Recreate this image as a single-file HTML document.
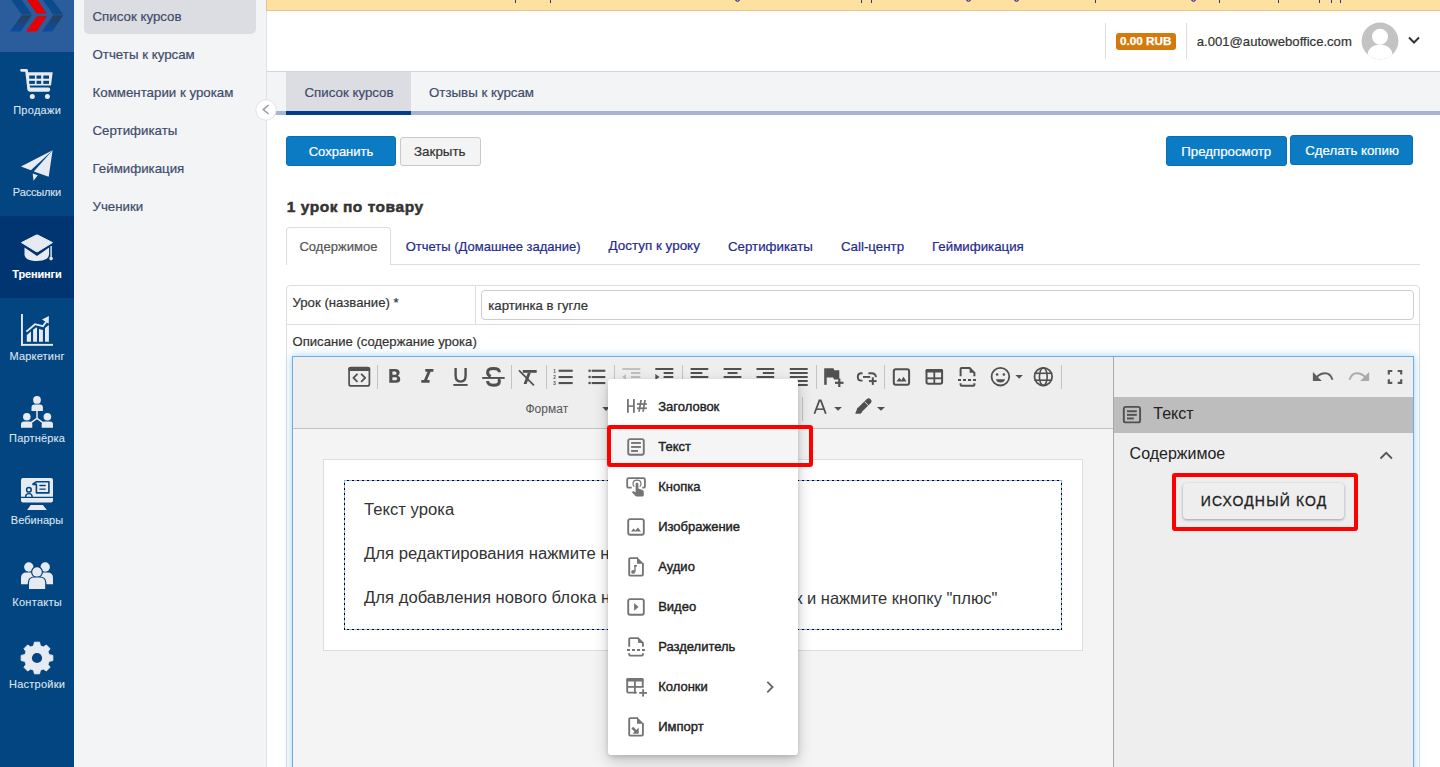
<!DOCTYPE html>
<html><head><meta charset="utf-8"><style>
*{box-sizing:border-box;margin:0;padding:0}
html,body{width:1440px;height:767px;overflow:hidden;background:#fff;font-family:"Liberation Sans",sans-serif}
.a{position:absolute}
.t{position:absolute;white-space:nowrap;line-height:1}
svg{overflow:visible}
</style></head><body>
<div class="a" style="left:0px;top:0px;width:74px;height:767px;background:#034581"></div>
<div class="a" style="left:0px;top:52px;width:74px;height:0px;"></div>
<div class="a" style="left:0px;top:0px;width:74px;height:52px;background:#2b5c9b"></div>
<svg class="a" style="left:0px;top:0px;" width="74" height="52" viewBox="0 0 74 52">
<defs><linearGradient id="lg1" x1="0" y1="0" x2="0" y2="1"><stop offset="0" stop-color="#2a3f58"/><stop offset="1" stop-color="#0a4ca4"/></linearGradient></defs>
<polygon points="11.2,0 21.7,0 31.8,14.6 21.7,14.6" fill="#0b4a8c"/>
<polygon points="21.7,15.2 31.8,15.2 20.7,31.5 9.8,31.5" fill="url(#lg1)"/>
<polygon points="27.1,0 37.6,0 46.75,13.6 36.6,13.6" fill="#e60000"/>
<polygon points="36.9,16.3 46.75,16.3 36.6,31.5 26.1,31.5" fill="#e60000"/>
<polygon points="43,0 52.5,0 63.4,14.6 53.2,14.6" fill="#0b4a8c"/>
<polygon points="53.2,15.2 63.4,15.2 52.2,31.5 42,31.5" fill="url(#lg1)"/>
</svg>
<div class="a" style="left:0px;top:216px;width:74px;height:82px;background:#013571"></div>
<div class="t" style="left:0.145px;top:105.19px;font-size:11px;color:#dde4ee;font-weight:400;letter-spacing:0.29px;width:74px;text-align:center;-webkit-text-stroke:0.1px #dde4ee">Продажи</div>
<div class="t" style="left:-0.075px;top:187.19px;font-size:11px;color:#dde4ee;font-weight:400;letter-spacing:-0.15px;width:74px;text-align:center;-webkit-text-stroke:0.1px #dde4ee">Рассылки</div>
<div class="t" style="left:-0.075px;top:269.19px;font-size:11px;color:#ffffff;font-weight:700;letter-spacing:-0.15px;width:74px;text-align:center;-webkit-text-stroke:0.1px #ffffff">Тренинги</div>
<div class="t" style="left:0.085px;top:351.19px;font-size:11px;color:#dde4ee;font-weight:400;letter-spacing:0.17px;width:74px;text-align:center;-webkit-text-stroke:0.1px #dde4ee">Маркетинг</div>
<div class="t" style="left:0.09px;top:433.19px;font-size:11px;color:#dde4ee;font-weight:400;letter-spacing:0.18px;width:74px;text-align:center;-webkit-text-stroke:0.1px #dde4ee">Партнёрка</div>
<div class="t" style="left:0.03px;top:515.19px;font-size:11px;color:#dde4ee;font-weight:400;letter-spacing:0.06px;width:74px;text-align:center;-webkit-text-stroke:0.1px #dde4ee">Вебинары</div>
<div class="t" style="left:0.13px;top:597.19px;font-size:11px;color:#dde4ee;font-weight:400;letter-spacing:0.26px;width:74px;text-align:center;-webkit-text-stroke:0.1px #dde4ee">Контакты</div>
<div class="t" style="left:0.115px;top:679.19px;font-size:11px;color:#dde4ee;font-weight:400;letter-spacing:0.23px;width:74px;text-align:center;-webkit-text-stroke:0.1px #dde4ee">Настройки</div>
<svg class="a" style="left:0px;top:0px;" width="74" height="110" viewBox="0 0 74 110">
<path d="M21.5,70.3 L26.5,70.3 L28.8,89.5" fill="none" stroke="#e6ebf2" stroke-width="2.8" stroke-linecap="round" stroke-linejoin="round"/>
<path d="M27.5,87.5 L48.5,87.5 Q50.2,87.5 50.2,89.6 Q50.2,91.7 48.5,91.7 L29.5,91.7 Q27.8,91.7 27.8,89.6 Z" fill="#e6ebf2"/>
<path d="M26.5,72.2 L52.7,72.2 L51,85.5 L28.5,85.5 Z" fill="#e6ebf2"/>
<rect x="29.2" y="75.5" width="5.7" height="3.2" fill="#034581"/>
<rect x="36.5" y="75.5" width="4.7" height="3.2" fill="#034581"/>
<rect x="43.3" y="75.5" width="5.7" height="3.2" fill="#034581"/>
<rect x="29.2" y="80.8" width="5.7" height="3.1" fill="#034581"/>
<rect x="36.5" y="80.8" width="4.7" height="3.1" fill="#034581"/>
<rect x="43.3" y="80.8" width="5.7" height="3.1" fill="#034581"/>
<circle cx="32.3" cy="96.4" r="2.5" fill="#e6ebf2"/>
<circle cx="47.4" cy="96.4" r="2.5" fill="#e6ebf2"/>
</svg>
<svg class="a" style="left:0px;top:0px;" width="74" height="190" viewBox="0 0 74 190">
<polygon points="21,166.6 52.6,150.2 30.9,170.2" fill="#e6ebf2"/>
<polygon points="52.6,150.2 48.7,176.8 33.8,171.6" fill="#e6ebf2"/>
<polygon points="32.7,173.6 37.8,175.2 33.5,180.7" fill="#e6ebf2"/>
</svg>
<svg class="a" style="left:0px;top:0px;" width="74" height="270" viewBox="0 0 74 270">
<path d="M24.5,247.5 L24.5,254 Q24.5,261 37,261 Q49.1,261 49.1,254 L49.1,247.5 L37,256 Z" fill="#e6ebf2"/>
<path d="M21.5,242.6 L36,235.2 Q37,234.7 38,235.2 L52.5,242.6 L38,251.5 Q37,252.2 36,251.5 Z" fill="#e6ebf2" stroke="#e6ebf2" stroke-width="1" stroke-linejoin="round"/>
<rect x="50.4" y="246" width="1.4" height="12" fill="#e6ebf2"/>
<circle cx="51.1" cy="258.6" r="1.8" fill="#e6ebf2"/>
</svg>
<svg class="a" style="left:0px;top:0px;" width="74" height="350" viewBox="0 0 74 350">
<rect x="21" y="314" width="1.9" height="31.8" fill="#e6ebf2"/>
<rect x="21" y="343.9" width="32" height="1.9" fill="#e6ebf2"/>
<polygon points="26.8,335 31,331.5 31,341.8 26.8,341.8" fill="#e6ebf2"/>
<polygon points="33.1,329.8 36,327.5 37,327.8 37,341.8 33.1,341.8" fill="#e6ebf2"/>
<polygon points="39,329 42.9,330 42.9,341.8 39,341.8" fill="#e6ebf2"/>
<polygon points="45,328 48.9,325 48.9,341.8 45,341.8" fill="#e6ebf2"/>
<polyline points="26.4,331.6 35,324.2 42.9,326.2 46.2,321.8" fill="none" stroke="#e6ebf2" stroke-width="1.9"/>
<polygon points="42,319.5 48.9,316 48.7,323.8" fill="#e6ebf2"/>
</svg>
<svg class="a" style="left:0px;top:0px;" width="74" height="430" viewBox="0 0 74 430">
<circle cx="37" cy="399.9" r="3.9" fill="#e6ebf2"/>
<path d="M31.5,410.9 L31.5,407.5 Q31.5,404.6 34.5,404.6 L39.9,404.6 Q42.9,404.6 42.9,407.5 L42.9,410.9 Z" fill="#e6ebf2"/>
<circle cx="26.8" cy="416.7" r="3.8" fill="#e6ebf2"/>
<path d="M21,427.8 L21,424.3 Q21,421.4 24,421.4 L29.3,421.4 Q32.3,421.4 32.3,424.3 L32.3,427.8 Z" fill="#e6ebf2"/>
<circle cx="47.4" cy="416.7" r="3.8" fill="#e6ebf2"/>
<path d="M41.7,427.8 L41.7,424.3 Q41.7,421.4 44.7,421.4 L50,421.4 Q53,421.4 53,424.3 L53,427.8 Z" fill="#e6ebf2"/>
<path d="M37,410.9 L37,418.3 L31.1,422.6 M37,418.3 L42.9,422.6" fill="none" stroke="#e6ebf2" stroke-width="1.5"/>
</svg>
<svg class="a" style="left:0px;top:0px;" width="74" height="512" viewBox="0 0 74 512">
<path d="M21,496.8 L21,480 Q21,477.9 23,477.9 L51,477.9 Q53,477.9 53,480 L53,496.8 Z" fill="#e6ebf2"/>
<path d="M21,498.1 L53,498.1 L53,500.6 Q53,502.6 51,502.6 L23,502.6 Q21,502.6 21,500.6 Z" fill="#e6ebf2"/>
<polygon points="30.7,505 42.9,505 46.8,510 27.2,510" fill="#e6ebf2"/>
<path d="M32.4,484.4 L36.2,481.8 L48.9,481.8 L48.9,492.9 L36.4,492.9 L36.4,484.4 L32.4,484.4" fill="none" stroke="#034581" stroke-width="1.6" stroke-linejoin="round"/>
<rect x="39.2" y="484.8" width="6.7" height="1.4" rx="0.7" fill="#034581"/>
<rect x="39.2" y="488.4" width="6.7" height="1.4" rx="0.7" fill="#034581"/>
<circle cx="28.9" cy="489.75" r="2.35" fill="none" stroke="#034581" stroke-width="1.5"/>
<path d="M25.7,496.9 L25.7,496.4 Q25.7,493.6 28.9,493.6 Q32.1,493.6 32.1,496.4 L32.1,496.9" fill="none" stroke="#034581" stroke-width="1.4"/>
</svg>
<svg class="a" style="left:0px;top:0px;" width="74" height="592" viewBox="0 0 74 592">
<circle cx="28.8" cy="567" r="4.7" fill="#e6ebf2"/>
<path d="M21,584.3 L21,578 Q21,572.5 26.5,572.5 L31,572.5 Q36.6,572.5 36.6,578 L36.6,584.3 Z" fill="#e6ebf2"/>
<circle cx="45.2" cy="567" r="4.7" fill="#e6ebf2"/>
<path d="M37.4,584.3 L37.4,578 Q37.4,572.5 43,572.5 L47.5,572.5 Q53,572.5 53,578 L53,584.3 Z" fill="#e6ebf2"/>
<circle cx="37" cy="572.1" r="5.4" fill="#e6ebf2" stroke="#034581" stroke-width="1.2"/>
<path d="M28.4,589.5 L28.4,583 Q28.4,577 34.5,577 L39.6,577 Q45.8,577 45.8,583 L45.8,589.5 Z" fill="#e6ebf2" stroke="#034581" stroke-width="1.2"/>
</svg>
<svg class="a" style="left:0px;top:0px;" width="74" height="680" viewBox="0 0 74 680"><polygon points="49.14,654.64 52.80,655.45 52.80,660.55 49.14,661.36 47.96,664.21 49.97,667.37 46.37,670.97 43.21,668.96 40.36,670.14 39.55,673.80 34.45,673.80 33.64,670.14 30.79,668.96 27.63,670.97 24.03,667.37 26.04,664.21 24.86,661.36 21.20,660.55 21.20,655.45 24.86,654.64 26.04,651.79 24.03,648.63 27.63,645.03 30.79,647.04 33.64,645.86 34.45,642.20 39.55,642.20 40.36,645.86 43.21,647.04 46.37,645.03 49.97,648.63 47.96,651.79" fill="#e6ebf2" stroke="#e6ebf2" stroke-width="1" stroke-linejoin="round"/><circle cx="37" cy="658" r="5.1" fill="#034581"/></svg>
<div class="a" style="left:74px;top:0px;width:193px;height:767px;background:#f3f4f6;border-right:1px solid #dfe1e6"></div>
<div class="a" style="left:84px;top:0px;width:172px;height:34px;background:#dcdde2;border-radius:0 0 5px 5px"></div>
<div class="t" style="left:92.5px;top:9.94px;font-size:13.3px;color:#3f4c6b;font-weight:400;-webkit-text-stroke:0.2px #3f4c6b;">Список курсов</div>
<div class="t" style="left:92.5px;top:47.94px;font-size:13.3px;color:#3f4c6b;font-weight:400;-webkit-text-stroke:0.2px #3f4c6b;">Отчеты к курсам</div>
<div class="t" style="left:92.5px;top:85.94px;font-size:13.3px;color:#3f4c6b;font-weight:400;-webkit-text-stroke:0.2px #3f4c6b;">Комментарии к урокам</div>
<div class="t" style="left:92.5px;top:123.94px;font-size:13.3px;color:#3f4c6b;font-weight:400;-webkit-text-stroke:0.2px #3f4c6b;">Сертификаты</div>
<div class="t" style="left:92.5px;top:161.94px;font-size:13.3px;color:#3f4c6b;font-weight:400;-webkit-text-stroke:0.2px #3f4c6b;">Геймификация</div>
<div class="t" style="left:92.5px;top:199.94px;font-size:13.3px;color:#3f4c6b;font-weight:400;-webkit-text-stroke:0.2px #3f4c6b;">Ученики</div>
<div class="a" style="left:266px;top:0px;width:1174px;height:11px;background:#fee0a0;border-bottom:1px solid #e3c88e;border-left:1px solid #dcc38a"></div>
<div class="a" style="left:515px;top:0px;width:1.3px;height:2.6px;background:#2c3a92"></div>
<div class="a" style="left:549.6px;top:0px;width:1.3px;height:2.6px;background:#2c3a92"></div>
<div class="a" style="left:861px;top:0px;width:1.3px;height:2.6px;background:#2c3a92"></div>
<div class="a" style="left:871px;top:0px;width:1.3px;height:2.6px;background:#2c3a92"></div>
<div class="a" style="left:1095px;top:0px;width:1.3px;height:2.6px;background:#2c3a92"></div>
<div class="a" style="left:1219px;top:0px;width:1.3px;height:2.6px;background:#2c3a92"></div>
<div class="a" style="left:1277.5px;top:0px;width:1.3px;height:2.6px;background:#2c3a92"></div>
<div class="a" style="left:1319px;top:0px;width:1.3px;height:2.6px;background:#2c3a92"></div>
<div class="a" style="left:1330.6px;top:0px;width:1.3px;height:2.6px;background:#2c3a92"></div>
<div class="a" style="left:1340px;top:0px;width:1.3px;height:2.6px;background:#2c3a92"></div>
<svg class="a" style="left:734px;top:0px;" width="8" height="4" viewBox="0 0 8 4"><path d="M1,-1 Q3.5,3.5 6,-1" fill="none" stroke="#2c3a92" stroke-width="1.2"/></svg>
<svg class="a" style="left:965px;top:0px;" width="8" height="4" viewBox="0 0 8 4"><path d="M1,-1 Q3.5,3.5 6,-1" fill="none" stroke="#2c3a92" stroke-width="1.2"/></svg>
<svg class="a" style="left:1013px;top:0px;" width="8" height="4" viewBox="0 0 8 4"><path d="M1,-1 Q3.5,3.5 6,-1" fill="none" stroke="#2c3a92" stroke-width="1.2"/></svg>
<svg class="a" style="left:1190px;top:0px;" width="8" height="4" viewBox="0 0 8 4"><path d="M1,-1 Q3.5,3.5 6,-1" fill="none" stroke="#2c3a92" stroke-width="1.2"/></svg>
<div class="a" style="left:267px;top:11px;width:1173px;height:61px;background:#fff;border-bottom:1px solid #d3d5da"></div>
<div class="a" style="left:1105px;top:23px;width:1px;height:36px;background:#dedede"></div>
<div class="a" style="left:1186px;top:23px;width:1px;height:36px;background:#dedede"></div>
<div class="a" style="left:1116px;top:33px;width:60px;height:17px;background:#d4790b;border-radius:3px"></div>
<div class="t" style="left:1120px;top:34.90px;font-size:11.7px;color:#fff;font-weight:700;-webkit-text-stroke:0.25px #fff;">0.00 RUB</div>
<div class="t" style="left:1196.8px;top:34.71px;font-size:13.1px;color:#333;font-weight:400;-webkit-text-stroke:0.2px #333;">a.001@autoweboffice.com</div>
<svg class="a" style="left:1360px;top:21px;" width="40" height="40" viewBox="0 0 40 40">
<defs><clipPath id="avc"><circle cx="20" cy="20" r="18.4"/></clipPath></defs>
<circle cx="20" cy="20" r="18.4" fill="#c3c3c3"/>
<g clip-path="url(#avc)"><circle cx="20" cy="15.7" r="8" fill="#fff"/><ellipse cx="20" cy="34" rx="12.5" ry="10.5" fill="#fff"/></g>
</svg>
<svg class="a" style="left:1405px;top:33px;" width="18" height="14" viewBox="0 0 18 14"><polyline points="4,4.5 9,9.5 14,4.5" fill="none" stroke="#333" stroke-width="2"/></svg>
<div class="a" style="left:267px;top:72px;width:1173px;height:43px;background:#f3f4f6"></div>
<div class="a" style="left:267px;top:111px;width:1173px;height:4px;background:#a7b5cf"></div>
<div class="a" style="left:286px;top:72px;width:125px;height:43px;background:#dcdde2"></div>
<div class="a" style="left:286px;top:111px;width:125px;height:4px;background:#033c87"></div>
<div class="t" style="left:304.5px;top:86.04px;font-size:13.3px;color:#3f4c6b;font-weight:400;-webkit-text-stroke:0.2px #3f4c6b;">Список курсов</div>
<div class="t" style="left:429px;top:86.04px;font-size:13.3px;color:#3f4c6b;font-weight:400;-webkit-text-stroke:0.2px #3f4c6b;">Отзывы к курсам</div>
<svg class="a" style="left:255px;top:99px;" width="22" height="22" viewBox="0 0 22 22"><circle cx="11" cy="11" r="10.2" fill="#fff" stroke="#e3e4e8" stroke-width="1"/><polyline points="13.6,6 8.2,10.6 13.6,15" fill="none" stroke="#999999" stroke-width="1.4"/></svg>
<div class="a" style="left:286px;top:136px;width:110px;height:30px;background:#0b7bc3;border:1px solid #0a6fb2;border-radius:3px"></div>
<div class="t" style="left:308.7px;top:144.90px;font-size:13px;color:#fff;font-weight:400;-webkit-text-stroke:0.2px #fff;">Сохранить</div>
<div class="a" style="left:399.5px;top:136.5px;width:81px;height:29px;background:#f4f4f4;border:1px solid #c9c9c9;border-radius:3px"></div>
<div class="t" style="left:414px;top:144.76px;font-size:13.4px;color:#333;font-weight:400;-webkit-text-stroke:0.2px #333;">Закрыть</div>
<div class="a" style="left:1166px;top:136px;width:121px;height:30px;background:#0b7bc3;border:1px solid #0a6fb2;border-radius:3px"></div>
<div class="a" style="left:1290px;top:135px;width:123px;height:30px;background:#0b7bc3;border:1px solid #0a6fb2;border-radius:3px"></div>
<div class="t" style="left:1181.3px;top:144.78px;font-size:13.25px;color:#fff;font-weight:400;-webkit-text-stroke:0.2px #fff;">Предпросмотр</div>
<div class="t" style="left:1305.3px;top:143.58px;font-size:13.25px;color:#fff;font-weight:400;-webkit-text-stroke:0.2px #fff;">Сделать копию</div>
<div class="t" style="left:286.7px;top:199.48px;font-size:15.5px;color:#333;font-weight:700;letter-spacing:0.55px;-webkit-text-stroke:0.5px #333;">1 урок по товару</div>
<div class="a" style="left:286px;top:264px;width:1134px;height:1px;background:#dddddd"></div>
<div class="a" style="left:286px;top:227px;width:105px;height:38px;background:#fff;border:1px solid #dddddd;border-bottom:none;border-radius:4px 4px 0 0"></div>
<div class="t" style="left:299.4px;top:239.75px;font-size:13.05px;color:#555;font-weight:400;-webkit-text-stroke:0.2px #555;">Содержимое</div>
<div class="t" style="left:405.7px;top:239.80px;font-size:13px;color:#1f2a8c;font-weight:400;-webkit-text-stroke:0.2px #1f2a8c;">Отчеты (Домашнее задание)</div>
<div class="t" style="left:608.5px;top:239.41px;font-size:13.45px;color:#1f2a8c;font-weight:400;-webkit-text-stroke:0.2px #1f2a8c;">Доступ к уроку</div>
<div class="t" style="left:728px;top:239.54px;font-size:13.3px;color:#1f2a8c;font-weight:400;-webkit-text-stroke:0.2px #1f2a8c;">Сертификаты</div>
<div class="t" style="left:841px;top:239.54px;font-size:13.3px;color:#1f2a8c;font-weight:400;-webkit-text-stroke:0.2px #1f2a8c;">Call-центр</div>
<div class="t" style="left:932px;top:239.54px;font-size:13.3px;color:#1f2a8c;font-weight:400;-webkit-text-stroke:0.2px #1f2a8c;">Геймификация</div>
<div class="a" style="left:286px;top:285px;width:1134px;height:500px;background:#fff;border:1px solid #dddddd;border-radius:4px"></div>
<div class="a" style="left:475px;top:286px;width:1px;height:38px;background:#dddddd"></div>
<div class="a" style="left:287px;top:324px;width:1132px;height:1px;background:#dddddd"></div>
<div class="t" style="left:292.5px;top:296.03px;font-size:13.2px;color:#333;font-weight:400;-webkit-text-stroke:0.2px #333;">Урок (название) *</div>
<div class="a" style="left:481px;top:290px;width:933px;height:30px;background:#fff;border:1px solid #cccccc;border-radius:4px"></div>
<div class="t" style="left:488.3px;top:298.83px;font-size:13.2px;color:#333;font-weight:400;-webkit-text-stroke:0.2px #333;">картинка в гугле</div>
<div class="t" style="left:292.5px;top:334.71px;font-size:13.1px;color:#333;font-weight:400;-webkit-text-stroke:0.2px #333;">Описание (содержание урока)</div>
<div class="a" style="left:292px;top:356px;width:1122px;height:430px;border:1px solid #66afe9;box-shadow:0 0 8px rgba(102,175,233,.6);background:#f4f4f4"></div>
<div class="a" style="left:293px;top:357px;width:820px;height:71px;background:#eeeeee"></div>
<div class="a" style="left:293px;top:428px;width:820px;height:1px;background:#c2c2c2"></div>
<div class="a" style="left:293px;top:429px;width:820px;height:340px;background:#f4f4f4"></div>
<div class="a" style="left:1113px;top:357px;width:1px;height:420px;background:#a9a9a9"></div>
<div class="a" style="left:1114px;top:357px;width:299px;height:420px;background:#eeeeee"></div>
<div class="a" style="left:377px;top:365px;width:1px;height:24px;background:#c4c4c4"></div>
<div class="a" style="left:511px;top:365px;width:1px;height:24px;background:#c4c4c4"></div>
<div class="a" style="left:546px;top:365px;width:1px;height:24px;background:#c4c4c4"></div>
<div class="a" style="left:614px;top:365px;width:1px;height:24px;background:#c4c4c4"></div>
<div class="a" style="left:682px;top:365px;width:1px;height:24px;background:#c4c4c4"></div>
<div class="a" style="left:816px;top:365px;width:1px;height:24px;background:#c4c4c4"></div>
<div class="a" style="left:884px;top:365px;width:1px;height:24px;background:#c4c4c4"></div>
<div class="a" style="left:1061px;top:365px;width:1px;height:24px;background:#c4c4c4"></div>
<div class="a" style="left:802px;top:397px;width:1px;height:24px;background:#c4c4c4"></div>
<svg class="a" style="left:0px;top:0px;" width="1" height="1" viewBox="0 0 1 1">
<g fill="none" stroke="#505050" stroke-linecap="butt">
 <rect x="349.1" y="367.7" width="20.3" height="18.2" rx="2" stroke-width="1.7"/>
</g>
<rect x="348.3" y="366.9" width="21.9" height="4" rx="1.5" fill="#505050"/>
<polyline points="357,374.3 353.4,377.8 357,381.3" fill="none" stroke="#505050" stroke-width="1.8" stroke-linecap="round" stroke-linejoin="round"/>
<polyline points="361.6,374.3 365.2,377.8 361.6,381.3" fill="none" stroke="#505050" stroke-width="1.8" stroke-linecap="round" stroke-linejoin="round"/>
<!-- B -->
<path fill="#505050" fill-rule="evenodd" d="M389.3,369 L395.2,369 Q399.6,369 399.6,372.6 Q399.6,374.9 397.8,375.7 Q400.3,376.6 400.3,379.2 Q400.3,382.8 395.8,382.8 L389.3,382.8 Z M392.4,371.6 L392.4,374.7 L395.1,374.7 Q396.6,374.7 396.6,373.15 Q396.6,371.6 395.1,371.6 Z M392.4,377.3 L392.4,380.2 L395.5,380.2 Q397.2,380.2 397.2,378.75 Q397.2,377.3 395.5,377.3 Z"/>
<!-- I -->
<path fill="#505050" d="M425.3,369 L433.4,369 L433.4,371.7 L430.6,371.7 L427.1,380 L429.6,380 L429.6,382.8 L421.3,382.8 L421.3,380 L424,380 L427.5,371.7 L425.3,371.7 Z"/>
<!-- U -->
<path d="M455.6,368 L455.6,375.5 Q455.6,381.6 460.6,381.6 Q465.6,381.6 465.6,375.5 L465.6,368" fill="none" stroke="#505050" stroke-width="2.4"/>
<rect x="453.3" y="384" width="14.3" height="1.9" fill="#505050"/>
<!-- S -->
<path d="M499.4,372.3 Q499.4,368.5 493.5,368.5 Q487.6,368.5 487.6,372.4 Q487.6,375.3 490.8,376.4" fill="none" stroke="#505050" stroke-width="3"/>
<path d="M487.6,381 Q487.6,385.2 493.5,385.2 Q499.4,385.2 499.4,381.2 Q499.4,379.6 498.2,378.9" fill="none" stroke="#505050" stroke-width="3"/>
<rect x="482.2" y="377" width="22.5" height="1.9" fill="#505050"/>
<!-- clear format -->
<rect x="522.8" y="370" width="13.9" height="2.8" fill="#505050"/>
<polygon points="527.8,372.8 530.8,372.8 526.6,384 523.6,384" fill="#505050"/>
<line x1="519" y1="370.4" x2="533.9" y2="385.3" stroke="#505050" stroke-width="1.7"/>
<rect x="558.6" y="369.7" width="14.1" height="2.1" fill="#505050"/><circle cx="589.6" cy="370.75" r="1.3" fill="#505050"/><rect x="591.7" y="369.7" width="13.6" height="2.1" fill="#505050"/><rect x="558.6" y="376" width="14.1" height="2.1" fill="#505050"/><circle cx="589.6" cy="377.05" r="1.3" fill="#505050"/><rect x="591.7" y="376" width="13.6" height="2.1" fill="#505050"/><rect x="558.6" y="382" width="14.1" height="2.1" fill="#505050"/><circle cx="589.6" cy="383.05" r="1.3" fill="#505050"/><rect x="591.7" y="382" width="13.6" height="2.1" fill="#505050"/><text x="553.2" y="372.6" font-size="4.6" font-family="Liberation Sans" font-weight="700" fill="#505050">1</text><text x="553.2" y="378.9" font-size="4.6" font-family="Liberation Sans" font-weight="700" fill="#505050">2</text><text x="553.2" y="385" font-size="4.6" font-family="Liberation Sans" font-weight="700" fill="#505050">3</text>
<rect x="622.3" y="368" width="18" height="2" fill="#c0c0c0"/>
<rect x="631" y="372" width="9.3" height="2" fill="#c0c0c0"/>
<rect x="631" y="376" width="9.3" height="2" fill="#c0c0c0"/>
<polygon points="626,374 622.3,377 626,380" fill="#c0c0c0"/>
<rect x="655.3" y="368" width="18" height="2" fill="#505050"/>
<rect x="663.6" y="372" width="9.7" height="2" fill="#505050"/>
<rect x="663.6" y="376" width="9.7" height="2" fill="#505050"/>
<polygon points="655.3,374 659.5,377 655.3,380" fill="#505050"/>
<rect x="690.6" y="368" width="17.699999999999932" height="2" fill="#505050"/><rect x="690.6" y="372" width="11.699999999999932" height="2" fill="#505050"/><rect x="690.6" y="376" width="17.699999999999932" height="2" fill="#505050"/><rect x="690.6" y="380" width="11.699999999999932" height="2" fill="#505050"/><rect x="690.6" y="384" width="17.699999999999932" height="2" fill="#505050"/><rect x="723.6" y="368" width="17.799999999999955" height="2" fill="#505050"/><rect x="727.6" y="372" width="9.899999999999977" height="2" fill="#505050"/><rect x="723.6" y="376" width="17.799999999999955" height="2" fill="#505050"/><rect x="727.6" y="380" width="9.899999999999977" height="2" fill="#505050"/><rect x="723.6" y="384" width="17.799999999999955" height="2" fill="#505050"/><rect x="756.5" y="368" width="17.700000000000045" height="2" fill="#505050"/><rect x="762.8" y="372" width="11.400000000000091" height="2" fill="#505050"/><rect x="756.5" y="376" width="17.700000000000045" height="2" fill="#505050"/><rect x="762.8" y="380" width="11.400000000000091" height="2" fill="#505050"/><rect x="756.5" y="384" width="17.700000000000045" height="2" fill="#505050"/><rect x="789.8" y="368" width="17.90000000000009" height="2" fill="#505050"/><rect x="789.8" y="372" width="17.90000000000009" height="2" fill="#505050"/><rect x="789.8" y="376" width="17.90000000000009" height="2" fill="#505050"/><rect x="789.8" y="380" width="17.90000000000009" height="2" fill="#505050"/><rect x="789.8" y="384" width="17.90000000000009" height="2" fill="#505050"/>
<rect x="824.2" y="368.3" width="2.5" height="16.5" fill="#505050"/>
<polygon points="826.2,368.3 833.5,368.3 834.2,370.2 839.3,370.2 839.3,379.4 834,379.4 833.2,377.6 826.2,377.6" fill="#505050"/>
<rect x="838.2" y="378.5" width="2.2" height="8.5" fill="#505050" stroke="#eeeeee" stroke-width="0"/>
<rect x="835" y="381.7" width="8.5" height="2.2" fill="#505050"/>
<path d="M862.5,373.2 L861.3,373.2 Q857.8,373.2 857.8,376.9 Q857.8,380.6 861.3,380.6 L862.5,380.6" fill="none" stroke="#505050" stroke-width="1.9"/>
<path d="M868.4,373.2 L871.6,373.2 Q875.6,373.2 876,377.2" fill="none" stroke="#505050" stroke-width="1.9"/>
<rect x="863" y="376" width="7.2" height="1.9" fill="#505050"/>
<rect x="871.8" y="377.3" width="2" height="7.6" fill="#505050"/>
<rect x="869" y="380.1" width="7.6" height="2" fill="#505050"/>
<rect x="868.2" y="380.6" width="1" height="0.1" fill="#505050"/>

<rect x="893.8" y="369.3" width="15.3" height="15.5" rx="2" fill="none" stroke="#505050" stroke-width="2"/>
<polygon points="896.5,381.5 899.3,377.8 901.3,380.3 903.5,376.7 906.5,381.5" fill="#505050"/>
<rect x="926.5" y="370" width="15.6" height="13.8" rx="1.8" fill="none" stroke="#505050" stroke-width="2"/>
<rect x="925.5" y="369" width="17.6" height="3.6" rx="1.5" fill="#505050"/>
<rect x="933.4" y="371" width="1.8" height="13" fill="#505050"/>
<rect x="926" y="377.4" width="16.5" height="1.8" fill="#505050"/>
<path d="M960.6,376.2 L960.6,369.1 Q960.6,368.1 961.6,368.1 L969.6,368.1 L974.4,372.8 L974.4,376.2" fill="none" stroke="#505050" stroke-width="2"/>
<polygon points="969.6,368.1 974.4,372.8 969.6,372.8" fill="#505050"/>
<path d="M958,380 L977,380" stroke="#505050" stroke-width="2" stroke-dasharray="3,2"/>
<path d="M960.6,383.3 L960.6,384.7 Q960.6,385.7 961.6,385.7 L973.4,385.7 Q974.4,385.7 974.4,384.7 L974.4,383.3" fill="none" stroke="#505050" stroke-width="2"/>
<circle cx="1000.4" cy="376.7" r="8.8" fill="none" stroke="#505050" stroke-width="1.8"/>
<circle cx="997.1" cy="374.5" r="1.3" fill="#505050"/>
<circle cx="1003.9" cy="374.5" r="1.3" fill="#505050"/>
<path d="M996,379.3 L1005,379.3 Q1004.3,382.6 1000.5,382.6 Q996.7,382.6 996,379.3 Z" fill="#505050"/>
<polygon points="1015.4,375 1022.9,375 1019.15,378.75" fill="#505050"/>
<circle cx="1043.3" cy="376.7" r="8.8" fill="none" stroke="#505050" stroke-width="1.8"/>
<ellipse cx="1043.3" cy="376.7" rx="3.9" ry="8.8" fill="none" stroke="#505050" stroke-width="1.6"/>
<rect x="1034.5" y="372.5" width="17.6" height="1.6" fill="#505050"/>
<rect x="1034.5" y="379.4" width="17.6" height="1.6" fill="#505050"/>

<path d="M814.4,413.8 L819.4,400.4 L820.8,400.4 L825.8,413.8" fill="none" stroke="#505050" stroke-width="1.8"/>
<rect x="816.3" y="408.4" width="7.5" height="1.5" fill="#505050"/>
<polygon points="834.2,406.9 841.9,406.9 838.05,410.7" fill="#505050"/>
<line x1="860.2" y1="409.6" x2="868.6" y2="401.2" stroke="#505050" stroke-width="5.6" stroke-linecap="round"/>
<line x1="864.6" y1="401.7" x2="868.8" y2="405.9" stroke="#eeeeee" stroke-width="0.9"/>
<polygon points="857.6,407.4 862.2,412 860.6,413.8 855.2,413.8" fill="#505050"/>
<polygon points="877,406.9 885,406.9 881,410.7" fill="#505050"/>
<polygon points="602.3,407 609.7,407 606,410.9" fill="#505050"/>
</svg>
<div class="t" style="left:525.5px;top:402.64px;font-size:12px;color:#555;font-weight:400;">Формат</div>
<div class="a" style="left:323px;top:459px;width:760px;height:192px;background:#fff;border:1px solid #dddddd"></div>
<div class="a" style="left:344px;top:480px;width:718px;height:1px;background:repeating-linear-gradient(90deg,#8aaefc 0 3px,#000 3px 5px)"></div>
<div class="a" style="left:344px;top:629px;width:718px;height:1px;background:repeating-linear-gradient(90deg,#8aaefc 0 3px,#000 3px 5px)"></div>
<div class="a" style="left:344px;top:480px;width:1px;height:150px;background:repeating-linear-gradient(180deg,#8aaefc 0 3px,#000 3px 5px)"></div>
<div class="a" style="left:1061px;top:480px;width:1px;height:150px;background:repeating-linear-gradient(180deg,#8aaefc 0 3px,#000 3px 5px)"></div>
<div class="t" style="left:364.1px;top:501.91px;font-size:16.65px;color:#333;font-weight:400;">Текст урока</div>
<div class="t" style="left:364.1px;top:545.71px;font-size:16.65px;color:#333;font-weight:400;">Для редактирования нажмите на текст</div>
<div class="t" style="left:364.1px;top:589.51px;font-size:16.65px;color:#333;font-weight:400;">Для добавления нового блока наведите курсор</div>
<div class="t" style="left:795.2px;top:589.63px;font-size:16.5px;color:#333;font-weight:400;">к и нажмите кнопку &quot;плюс&quot;</div>
<svg class="a" style="left:0px;top:0px;" width="1" height="1" viewBox="0 0 1 1">
<path d="M1316.5,377.3 Q1320.3,373.2 1325.3,373.2 Q1330.4,373.2 1332.5,379.8" fill="none" stroke="#5e5e5e" stroke-width="2"/>
<polygon points="1312.9,372 1312.9,381 1321.8,381" fill="#5e5e5e"/>
<path d="M1365.5,377.3 Q1361.7,373.2 1356.7,373.2 Q1351.6,373.2 1349.5,379.8" fill="none" stroke="#aaaaaa" stroke-width="2"/>
<polygon points="1369.1,372 1369.1,381 1360.2,381" fill="#aaaaaa"/>
<path d="M1388.8,374.5 L1388.8,371 L1392.3,371 M1397.7,371 L1401.2,371 L1401.2,374.5 M1401.2,379.3 L1401.2,382.8 L1397.7,382.8 M1392.3,382.8 L1388.8,382.8 L1388.8,379.3" fill="none" stroke="#5a5a5a" stroke-width="2.2"/>
</svg>
<div class="a" style="left:1114px;top:397px;width:299px;height:36px;background:#bdbdbd"></div>
<svg class="a" style="left:0px;top:0px;" width="1" height="1" viewBox="0 0 1 1">
<rect x="1123.8" y="406.9" width="16.3" height="15.5" rx="2" fill="none" stroke="#505050" stroke-width="1.9"/>
<rect x="1127" y="410.3" width="9.8" height="1.9" fill="#505050"/>
<rect x="1127" y="413.9" width="9.8" height="1.9" fill="#505050"/>
<rect x="1127" y="417.5" width="6.8" height="1.9" fill="#505050"/>
</svg>
<div class="t" style="left:1153.3px;top:406.46px;font-size:16px;color:#222;font-weight:400;">Текст</div>
<div class="t" style="left:1129.6px;top:446.46px;font-size:16px;color:#222;font-weight:400;">Содержимое</div>
<svg class="a" style="left:0px;top:0px;" width="1" height="1" viewBox="0 0 1 1"><polyline points="1380.5,458.5 1386.2,452.8 1391.9,458.5" fill="none" stroke="#555" stroke-width="1.8"/></svg>
<div class="a" style="left:1183px;top:483px;width:161px;height:36px;background:#eeeeee;border-radius:4px;box-shadow:0 1px 3px rgba(0,0,0,.35)"></div>
<div class="t" style="left:1200.8px;top:494.25px;font-size:14px;color:#222;font-weight:400;letter-spacing:1.15px;-webkit-text-stroke:0.3px #222;">ИСХОДНЫЙ КОД</div>
<div class="a" style="left:1172px;top:473px;width:186px;height:58px;border:4px solid #ff0000;border-radius:3px"></div>
<div class="a" style="left:608px;top:379px;width:190px;height:376px;background:#fff;border-radius:3px;box-shadow:0 6px 16px rgba(0,0,0,.2),0 2px 5px rgba(0,0,0,.14)"></div>
<div class="a" style="left:608px;top:429px;width:190px;height:34px;background:#f5f5f5"></div>
<div class="t" style="left:658.2px;top:400.30px;font-size:13px;color:#222;font-weight:400;-webkit-text-stroke:0.4px #222">Заголовок</div>
<div class="t" style="left:658.2px;top:440.30px;font-size:13px;color:#222;font-weight:400;-webkit-text-stroke:0.4px #222">Текст</div>
<div class="t" style="left:658.2px;top:480.30px;font-size:13px;color:#222;font-weight:400;-webkit-text-stroke:0.4px #222">Кнопка</div>
<div class="t" style="left:658.2px;top:520.30px;font-size:13px;color:#222;font-weight:400;-webkit-text-stroke:0.4px #222">Изображение</div>
<div class="t" style="left:658.2px;top:560.30px;font-size:13px;color:#222;font-weight:400;-webkit-text-stroke:0.4px #222">Аудио</div>
<div class="t" style="left:658.2px;top:600.30px;font-size:13px;color:#222;font-weight:400;-webkit-text-stroke:0.4px #222">Видео</div>
<div class="t" style="left:658.2px;top:640.30px;font-size:13px;color:#222;font-weight:400;-webkit-text-stroke:0.4px #222">Разделитель</div>
<div class="t" style="left:658.2px;top:680.30px;font-size:13px;color:#222;font-weight:400;-webkit-text-stroke:0.4px #222">Колонки</div>
<div class="t" style="left:658.2px;top:720.30px;font-size:13px;color:#222;font-weight:400;-webkit-text-stroke:0.4px #222">Импорт</div>
<svg class="a" style="left:0px;top:0px;" width="1" height="1" viewBox="0 0 1 1">
<!-- H# -->
<rect x="627" y="399.1" width="1.8" height="13.7" fill="#757575"/>
<rect x="633" y="399.1" width="1.8" height="13.7" fill="#757575"/>
<rect x="628" y="405.3" width="6" height="1.6" fill="#757575"/>
<rect x="637" y="403.2" width="9.9" height="1.7" fill="#757575"/>
<rect x="637" y="407.4" width="9.9" height="1.7" fill="#757575"/>
<polygon points="640.2,400 641.9,400 639.9,411.8 638.2,411.8" fill="#757575"/>
<polygon points="644.2,400 645.9,400 643.9,411.8 642.2,411.8" fill="#757575"/>
<!-- text -->
<rect x="628.2" y="439.1" width="15.6" height="15.6" rx="2" fill="none" stroke="#757575" stroke-width="1.9"/>
<rect x="631.1" y="442" width="9.8" height="1.9" fill="#757575"/>
<rect x="631.1" y="446" width="9.8" height="1.9" fill="#757575"/>
<rect x="631.1" y="450" width="6.9" height="1.9" fill="#757575"/>
<!-- button -->
<path d="M631.7,487.7 L628.5,487.7 Q627.2,487.7 627.2,486.4 L627.2,479.5 Q627.2,478.2 628.5,478.2 L643.6,478.2 Q644.9,478.2 644.9,479.5 L644.9,486.4 Q644.9,487.7 643.6,487.7 L642.3,487.7" fill="none" stroke="#757575" stroke-width="1.8"/>
<path d="M634.3,486.6 Q633,485.3 633,483.9 Q633,480.2 637,480.2 Q641,480.2 641,483.9 Q641,485.3 639.7,486.6" fill="none" stroke="#757575" stroke-width="1.2"/>
<path d="M635.6,484 Q635.6,482.7 637,482.7 Q638.4,482.7 638.4,484 L638.4,488.5 L642.5,490 Q643.8,490.5 643.8,492 L643.8,495 Q643.8,496.6 642.2,496.6 L637.2,496.6 Q636.2,496.6 635.5,495.9 L631.9,492.3 L633.4,490.9 L635.6,492.4 Z" fill="#757575"/>
<!-- image -->
<rect x="628.2" y="519.1" width="15.6" height="15.6" rx="2" fill="none" stroke="#757575" stroke-width="1.9"/>
<polygon points="631,531.5 633.4,528.6 635.5,530.6 637.9,527.4 641.1,531.5" fill="#757575"/>
<!-- audio -->
<path d="M637.8,558.1 L630.2,558.1 Q629.2,558.1 629.2,559.1 L629.2,574.6 Q629.2,575.6 630.2,575.6 L641.9,575.6 Q642.9,575.6 642.9,574.6 L642.9,563.2" fill="none" stroke="#757575" stroke-width="1.9"/>
<polygon points="637,557.1 643.9,563.7 637,563.7" fill="#757575"/>
<circle cx="633.1" cy="571.9" r="1.9" fill="#757575"/>
<rect x="634.3" y="565" width="1.4" height="7" fill="#757575"/>
<rect x="634.3" y="565" width="2.6" height="1.6" fill="#757575"/>
<!-- video -->
<rect x="628.2" y="599.1" width="15.6" height="15.6" rx="2" fill="none" stroke="#757575" stroke-width="1.9"/>
<polygon points="634.1,603.1 638.6,606.9 634.1,610.8" fill="#757575"/>
<!-- divider -->
<path d="M629.2,646.7 L629.2,639.1 Q629.2,638.1 630.2,638.1 L637.8,638.1 L642.9,643.2 L642.9,646.7" fill="none" stroke="#757575" stroke-width="1.9"/>
<polygon points="637.8,637.1 643.9,643 638.2,643" fill="#757575"/>
<path d="M627,650 L645,650" stroke="#757575" stroke-width="2" stroke-dasharray="3,2"/>
<path d="M629.2,653.3 L629.2,654.6 Q629.2,655.6 630.2,655.6 L641.9,655.6 Q642.9,655.6 642.9,654.6 L642.9,653.3" fill="none" stroke="#757575" stroke-width="1.9"/>
<!-- columns -->
<path d="M636.8,692.6 L628.3,692.6 Q627.2,692.6 627.2,691.5 L627.2,680 Q627.2,679 628.3,679 L641.7,679 Q642.7,679 642.7,680 L642.7,686.9" fill="none" stroke="#757575" stroke-width="1.9"/>
<rect x="626.3" y="678.1" width="17.35" height="3.5" rx="1.5" fill="#757575"/>
<rect x="627" y="686" width="16.6" height="1.8" fill="#757575"/>
<rect x="634" y="680" width="1.8" height="13.5" fill="#757575"/>
<rect x="642.2" y="689.2" width="1.8" height="7.4" fill="#757575"/>
<rect x="639.2" y="692" width="7.7" height="1.8" fill="#757575"/>
<!-- import -->
<path d="M637.8,718.1 L630.2,718.1 Q629.2,718.1 629.2,719.1 L629.2,734.6 Q629.2,735.6 630.2,735.6 L641.9,735.6 Q642.9,735.6 642.9,734.6 L642.9,723.2" fill="none" stroke="#757575" stroke-width="1.9"/>
<polygon points="637,717.1 643.9,723.7 637,723.7" fill="#757575"/>
<polygon points="632.6,733.8 638.7,727.4 638.7,733.8" fill="#757575"/><line x1="632.3" y1="727.7" x2="636.2" y2="731.6" stroke="#757575" stroke-width="2.6"/>
<!-- chevron -->
<polyline points="767.3,681.8 772.6,687 767.3,692.3" fill="none" stroke="#666" stroke-width="1.8"/>
</svg>
<div class="a" style="left:607px;top:425px;width:206px;height:42px;border:4px solid #ff0000;border-radius:3px"></div>
</body></html>
